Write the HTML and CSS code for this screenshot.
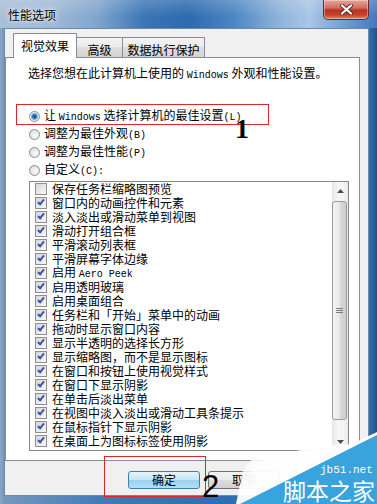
FILE: index.html
```html
<!DOCTYPE html>
<html lang="zh-CN">

<head>
  <meta charset="utf-8">
  <title>性能选项</title>
  <link rel="stylesheet" href="styles.css">
</head>

<body>
  <div class="window">
    <div class="titlebar">
      <span class="title">性能选项</span>
      <div class="close">
        <svg width="13" height="11" viewBox="0 0 13 11">
          <path d="M2 1.5 L11 9.5 M11 1.5 L2 9.5" stroke="#5a2a24" stroke-width="4" stroke-linecap="round" />
          <path d="M2 1.5 L11 9.5 M11 1.5 L2 9.5" stroke="#fff" stroke-width="2.2" stroke-linecap="round" />
        </svg>
      </div>
    </div>

    <div class="client">
      <div class="tabs">
        <div class="tab active">视觉效果</div>
        <div class="tab">高级</div>
        <div class="tab">数据执行保护</div>
      </div>

      <div class="panel">
        <p class="desc">选择您想在此计算机上使用的 <span class="en">Windows</span> 外观和性能设置。</p>

        <div class="options">
          <div class="opt"><span class="radio on"></span><span>让 <span class="en">Windows</span> 选择计算机的最佳设置<span class="en">(L)</span></span></div>
          <div class="opt"><span class="radio"></span><span>调整为最佳外观<span class="en">(B)</span></span></div>
          <div class="opt"><span class="radio"></span><span>调整为最佳性能<span class="en">(P)</span></span></div>
          <div class="opt"><span class="radio"></span><span>自定义<span class="en">(C):</span></span></div>
        </div>

        <div class="listbox">
          <ul class="items">
            <li><span class="check"></span>保存任务栏缩略图预览</li>
            <li><span class="check on"></span>窗口内的动画控件和元素</li>
            <li><span class="check on"></span>淡入淡出或滑动菜单到视图</li>
            <li><span class="check on"></span>滑动打开组合框</li>
            <li><span class="check on"></span>平滑滚动列表框</li>
            <li><span class="check on"></span>平滑屏幕字体边缘</li>
            <li><span class="check on"></span><span>启用 <span class="en">Aero Peek</span></span></li>
            <li><span class="check on"></span>启用透明玻璃</li>
            <li><span class="check on"></span>启用桌面组合</li>
            <li><span class="check on"></span>任务栏和「开始」菜单中的动画</li>
            <li><span class="check on"></span>拖动时显示窗口内容</li>
            <li><span class="check on"></span>显示半透明的选择长方形</li>
            <li><span class="check on"></span>显示缩略图，而不是显示图标</li>
            <li><span class="check on"></span>在窗口和按钮上使用视觉样式</li>
            <li><span class="check on"></span>在窗口下显示阴影</li>
            <li><span class="check on"></span>在单击后淡出菜单</li>
            <li><span class="check on"></span>在视图中淡入淡出或滑动工具条提示</li>
            <li><span class="check on"></span>在鼠标指针下显示阴影</li>
            <li><span class="check on"></span>在桌面上为图标标签使用阴影</li>
          </ul>
          <div class="scrollbar">
            <div class="sb-btn">
              <svg width="7" height="4" viewBox="0 0 7 4"><path d="M0 4 L3.5 0 L7 4 Z" fill="#4d4d4d" /></svg>
            </div>
            <div class="sb-track">
              <div class="thumb">
                <svg width="7" height="7" viewBox="0 0 7 7">
                  <path d="M0 1.5 H7 M0 3.5 H7 M0 5.5 H7" stroke="#7c7c7c" stroke-width="1" />
                </svg>
              </div>
            </div>
            <div class="sb-btn">
              <svg width="7" height="4" viewBox="0 0 7 4"><path d="M0 0 L3.5 4 L7 0 Z" fill="#4d4d4d" /></svg>
            </div>
          </div>
        </div>
      </div>

      <div class="buttons">
        <div class="btn default">确定</div>
        <div class="btn">取消</div>
      </div>
    </div>

    <!-- annotations pasted on top of the screenshot -->
    <div class="mark mark-1"></div>
    <span class="num num-1">1</span>
    <div class="mark mark-2"></div>
    <span class="num num-2">2</span>

    <div class="watermark">
      <svg width="377" height="504" viewBox="0 0 377 504">
        <defs>
          <linearGradient id="haze" x1="0" y1="0" x2="1" y2="0.4">
            <stop offset="0" stop-color="#fff" stop-opacity="0" />
            <stop offset="0.3" stop-color="#fff" stop-opacity="0.95" />
            <stop offset="1" stop-color="#fff" stop-opacity="0.97" />
          </linearGradient>
        </defs>
        <path d="M236 504 L243 470 L252 459 L318 447 L352 444 L377 432 L377 504 Z" fill="url(#haze)" />
        <path d="M240 504 L377 435 L377 504 Z" fill="#38a3dc" />
      </svg>
      <span class="wm-url">jb51.net</span>
      <span class="wm-name">脚本之家</span>
    </div>
  </div>
</body>

</html>
```

FILE: styles.css
```css
*,
*::before,
*::after {
  box-sizing: border-box;
}

html,
body {
  margin: 0;
  padding: 0;
}

body {
  width: 377px;
  height: 504px;
  overflow: hidden;
  font-family: "Noto Sans CJK SC", "Noto Sans", sans-serif;
  font-size: 12px;
  color: #000;
}

p,
ul {
  margin: 0;
  padding: 0;
}

.en {
  font-family: "Liberation Mono", monospace;
  font-size: 10px;
}

/* aero frame */
.window {
  position: relative;
  width: 377px;
  height: 504px;
  display: flex;
  flex-direction: column;
  background: linear-gradient(90deg, #8aa6c4 0, #7497bd 4px, #3d78b8 30%, #2f6db2 60%, #3c7dc4 97%, #214f8a 100%);
}

.titlebar {
  height: 28px;
  flex: none;
  display: flex;
  justify-content: space-between;
  align-items: flex-start;
  padding-left: 8px;
  padding-right: 8px;
  background:
    linear-gradient(rgba(255, 255, 255, 0.18), rgba(255, 255, 255, 0) 60%),
    linear-gradient(90deg, #a8bfd8 0%, #9fb9d6 14%, #7fa5cd 26%, #3b76b5 38%, #2c6aae 50%, #4c86c2 62%, #8fb3da 74%, #a9c6e6 82%, #6d9bd0 92%, #3e7ac0 100%);
}

.title {
  align-self: center;
  margin-top: 1px;
  line-height: 16px;
  text-shadow: 0 0 6px rgba(255, 255, 255, 0.9), 0 0 3px rgba(255, 255, 255, 0.9);
}

.close {
  width: 46px;
  height: 20px;
  display: flex;
  align-items: center;
  justify-content: center;
  border: 1px solid #6b2b24;
  border-top: none;
  border-radius: 0 0 5px 5px;
  background: linear-gradient(#e6a79a 0%, #d1705f 40%, #b8331f 55%, #c6452f 80%, #dd8a6a 100%);
  box-shadow: inset 0 0 0 1px rgba(255, 255, 255, 0.35);
}

.client {
  flex: 1;
  margin: 0 8px 8px 4px;
  border: 1px solid #6f89a8;
  background: #f0f0f0;
  display: flex;
  flex-direction: column;
}

/* tabs */
.tabs {
  height: 28px;
  flex: none;
  display: flex;
  align-items: flex-end;
  padding-left: 9px;
}

.tab {
  height: 20px;
  padding-top: 5px;
  line-height: 14px;
  text-align: center;
  border: 1px solid #898c95;
  border-bottom: none;
  margin-left: -1px;
  background: linear-gradient(#f3f3f3, #ebebeb 50%, #dedede 50%, #d3d3d3);
}

.tab:nth-child(1) {
  width: 64px;
}

.tab:nth-child(2) {
  width: 47px;
}

.tab:nth-child(3) {
  width: 83px;
}

.tab.active {
  position: relative;
  z-index: 1;
  height: 25px;
  margin-bottom: -1px;
  padding-top: 5px;
  background: #fff;
}

.panel {
  height: 404px;
  flex: none;
  margin-right: 8px;
  border: 1px solid #898c95;
  background: #fff;
  padding: 8px 0 0 22px;
}

.desc {
  line-height: 14px;
}

.options {
  margin-top: 24px;
  padding-left: 1px;
}

.opt {
  height: 18px;
  display: flex;
  align-items: center;
  line-height: 18px;
  white-space: pre;
}

.radio {
  width: 11px;
  height: 11px;
  margin-right: 4px;
  border: 1px solid #8e8f8f;
  border-radius: 50%;
  background: radial-gradient(circle at 60% 60%, #fbfbfb 0, #e4e4e4 60%, #cfcfcf 100%);
}

.radio.on {
  background: radial-gradient(circle, #17456f 0, #2c6aa0 1.6px, #7fb2dc 3px, #e3eef7 4px, #f4f4f4 100%);
}

/* list box with checkboxes */
.listbox {
  margin-top: 2px;
  margin-left: 1px;
  width: 320px;
  height: 270px;
  border: 1px solid #828790;
  display: flex;
  background: #fff;
}

.items {
  flex: 1;
  list-style: none;
}

.items li {
  height: 14px;
  display: flex;
  align-items: center;
  line-height: 14px;
  white-space: pre;
}

.check {
  position: relative;
  width: 12px;
  height: 12px;
  margin: 0 5px 0 5px;
  flex: none;
  border: 1px solid #8f8f8f;
  background: linear-gradient(135deg, #d7d7d7, #f8f8f8);
}

.check.on::after {
  content: "";
  position: absolute;
  left: 3px;
  top: 0;
  width: 4px;
  height: 7px;
  border: solid #3a57a6;
  border-width: 0 2px 2px 0;
  transform: rotate(40deg);
}

.scrollbar {
  width: 16px;
  display: flex;
  flex-direction: column;
  background: linear-gradient(90deg, #e6e6e6, #f6f6f6 40%, #f6f6f6 70%, #e9e9e9);
}

.sb-btn {
  height: 17px;
  flex: none;
  display: flex;
  align-items: center;
  justify-content: center;
}

.sb-track {
  flex: 1;
  padding: 2px 0 13px;
}

.thumb {
  height: 100%;
  margin: 0 1px 0 0;
  border: 1px solid #9b9b9b;
  border-radius: 3px;
  display: flex;
  align-items: center;
  justify-content: center;
  background: linear-gradient(90deg, #f4f4f4, #e8e8e8 50%, #d8d8d8 51%, #cfcfcf);
}

/* dialog buttons */
.buttons {
  display: flex;
  gap: 8px;
  padding-left: 123px;
  margin-top: 10px;
}

.btn {
  width: 72px;
  height: 18px;
  line-height: 16px;
  text-align: center;
  border: 1px solid #707070;
  border-radius: 3px;
  background: linear-gradient(#f2f2f2, #ebebeb 50%, #dddddd 50%, #cfcfcf);
}

.btn.default {
  border-color: #3c7fb1;
  background: linear-gradient(#e5f4fc, #c4e5f6 50%, #98d1ef 50%, #b6dff4);
}

/* red annotations */
.mark {
  position: absolute;
  border: 1px solid #e0262d;
}

.mark-1 {
  left: 16px;
  top: 104px;
  width: 253px;
  height: 21px;
}

.mark-2 {
  left: 104px;
  top: 456px;
  width: 102px;
  height: 41px;
}

.num {
  position: absolute;
  color: #000;
}

.num-1 {
  left: 235px;
  top: 115px;
  font-family: "Liberation Serif", serif;
  font-weight: bold;
  font-size: 28px;
  line-height: 28px;
}

.num-2 {
  left: 202px;
  top: 471px;
  font-family: "Liberation Sans", sans-serif;
  font-size: 31px;
  line-height: 31px;
}

/* site watermark */
.watermark {
  position: absolute;
  left: 0;
  top: 0;
  width: 377px;
  height: 504px;
  pointer-events: none;
}

.watermark svg {
  display: block;
}

.wm-url {
  position: absolute;
  left: 320px;
  top: 463px;
  color: #fff;
  font-family: "Liberation Mono", monospace;
  font-size: 11px;
  line-height: 14px;
}

.wm-name {
  position: absolute;
  left: 283px;
  top: 477px;
  color: #fff;
  font-size: 23px;
  line-height: 26px;
}
```
